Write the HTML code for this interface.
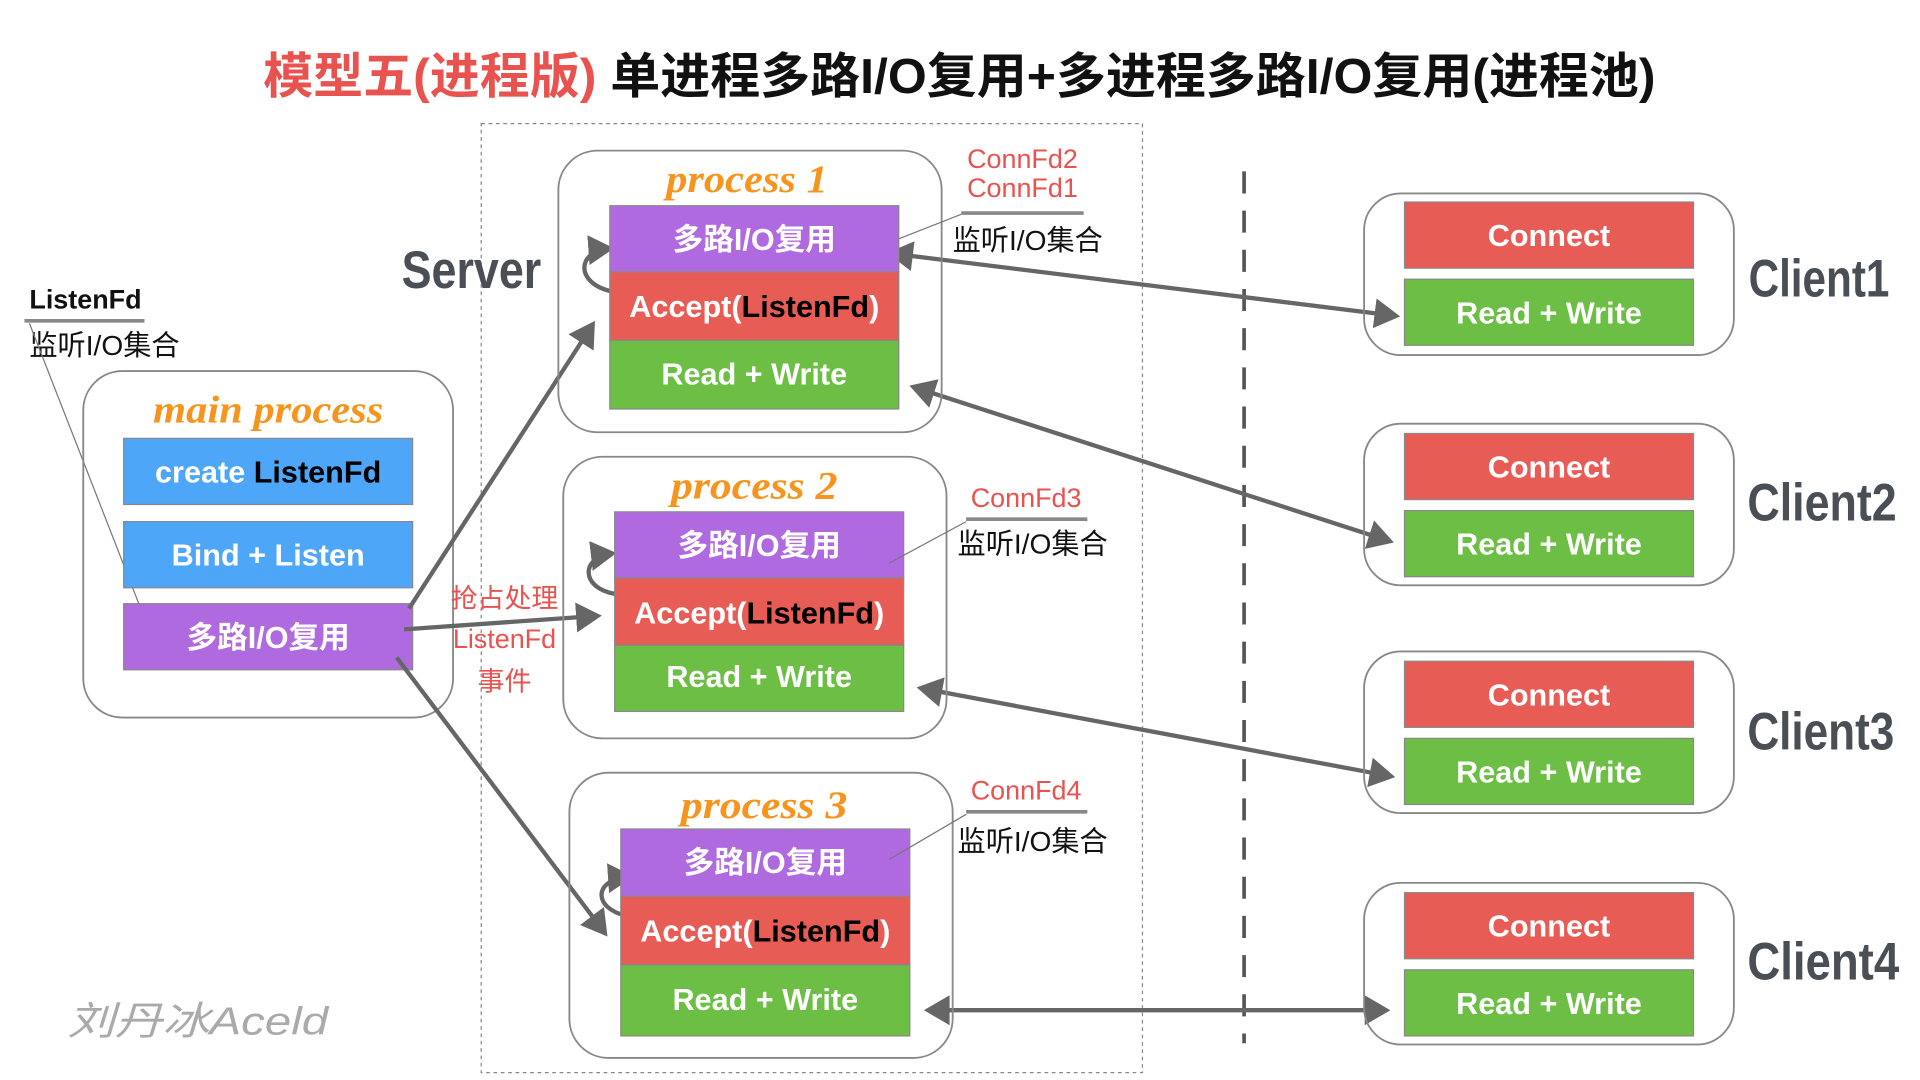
<!DOCTYPE html>
<html><head><meta charset="utf-8"><style>
html,body{margin:0;padding:0;background:#fff;width:1920px;height:1080px;overflow:hidden}
svg{display:block}
text{font-family:"Liberation Sans","Noto Sans CJK SC",sans-serif}
.w{fill:#fff;font-weight:bold;font-size:25px}
.pt{fill:#f7941d;font-weight:bold;font-size:32px;font-family:"Liberation Serif","Noto Serif CJK SC",serif;font-style:italic}
.cl{fill:#4a4f55;font-weight:bold;font-size:43px;font-family:"Liberation Sans",sans-serif}
.rl{fill:#e8534f;font-size:22px}
.bl{fill:#111;font-size:23px}
</style></head><body>
<svg width="1920" height="1080" viewBox="0 0 1568 882" preserveAspectRatio="none">
<defs><marker id="a" markerWidth="7" markerHeight="7" refX="5" refY="3.5" orient="auto" markerUnits="strokeWidth"><path d="M0,0 L6,3.5 L0,7 z" fill="#666"/></marker>
<marker id="s" markerWidth="7" markerHeight="7" refX="1" refY="3.5" orient="auto" markerUnits="strokeWidth"><path d="M6,0 L0,3.5 L6,7 z" fill="#666"/></marker></defs>
<text x="215" y="76" font-size="40" font-weight="bold" textLength="1137" lengthAdjust="spacingAndGlyphs"><tspan fill="#e8534f">模型五(进程版)</tspan><tspan fill="#111"> 单进程多路I/O复用+多进程多路I/O复用(进程池)</tspan></text>
<rect x="393" y="101" width="540" height="775" fill="none" stroke="#888" stroke-dasharray="3,3"/>
<line x1="1016" y1="140" x2="1016" y2="852" stroke="#555" stroke-width="3" stroke-dasharray="18,14"/>
<text x="328" y="235" class="cl" textLength="114" lengthAdjust="spacingAndGlyphs">Server</text>
<text x="24" y="252" font-size="22" font-weight="bold" fill="#111">ListenFd</text>
<line x1="20" y1="262" x2="118" y2="262" stroke="#888" stroke-width="3"/>
<text x="24" y="290" class="bl">监听I/O集合</text>
<line x1="24" y1="264" x2="120" y2="510" stroke="#777" stroke-width="1"/>
<rect x="68" y="303" width="302" height="283" rx="32" fill="none" stroke="#888" stroke-width="1.5"/>
<text x="125" y="345" class="pt" textLength="188" lengthAdjust="spacingAndGlyphs">main process</text>
<rect x="101" y="358" width="236" height="54" fill="#4da6f8" stroke="#888"/>
<text x="219" y="394" class="w" text-anchor="middle">create <tspan fill="#000">ListenFd</tspan></text>
<rect x="101" y="426" width="236" height="54" fill="#4da6f8" stroke="#888"/>
<text x="219" y="462" class="w" text-anchor="middle">Bind + Listen</text>
<rect x="101" y="493" width="236" height="54" fill="#b06ae0" stroke="#888"/>
<text x="219" y="529" class="w" text-anchor="middle">多路I/O复用</text>
<text x="412" y="496" class="rl" text-anchor="middle">抢占处理</text>
<text x="412" y="529" class="rl" text-anchor="middle">ListenFd</text>
<text x="412" y="564" class="rl" text-anchor="middle">事件</text>
<g stroke="#666" stroke-width="3.5" fill="none">
<path d="M334,497 L484,265" marker-end="url(#a)"/>
<path d="M330,514 L488,503" marker-end="url(#a)"/>
<path d="M324,537 L494,762" marker-end="url(#a)"/>
<path d="M728,207 L1140,258" marker-start="url(#s)" marker-end="url(#a)"/>
<path d="M746,316 L1135,442" marker-start="url(#s)" marker-end="url(#a)"/>
<path d="M752,562 L1136,634" marker-start="url(#s)" marker-end="url(#a)"/>
<path d="M758,825 L1132,825" marker-start="url(#s)" marker-end="url(#a)"/>
<path d="M500,238 C470,232 470,205 498,203" marker-end="url(#a)"/>
<path d="M502,485 C474,480 474,455 500,452" marker-end="url(#a)"/>
<path d="M512,748 C484,742 484,718 514,716" marker-end="url(#a)"/>
</g>
<g>
<rect x="456" y="123" width="313" height="230" rx="32" fill="none" stroke="#888" stroke-width="1.5"/>
<text x="544" y="157" class="pt" textLength="132" lengthAdjust="spacingAndGlyphs">process 1</text>
<rect x="498" y="168" width="236" height="54" fill="#b06ae0" stroke="#888"/><text x="616" y="204" class="w" text-anchor="middle">多路I/O复用</text>
<rect x="498" y="222" width="236" height="56" fill="#e85c56" stroke="#888"/><text x="616" y="259" class="w" text-anchor="middle">Accept(<tspan fill="#000">ListenFd</tspan>)</text>
<rect x="498" y="278" width="236" height="56" fill="#6cbf44" stroke="#888"/><text x="616" y="314" class="w" text-anchor="middle">Read + Write</text>
</g>
<g>
<rect x="460" y="373" width="313" height="230" rx="32" fill="none" stroke="#888" stroke-width="1.5"/>
<text x="548" y="407" class="pt" textLength="136" lengthAdjust="spacingAndGlyphs">process 2</text>
<rect x="502" y="418" width="236" height="54" fill="#b06ae0" stroke="#888"/><text x="620" y="454" class="w" text-anchor="middle">多路I/O复用</text>
<rect x="502" y="472" width="236" height="55" fill="#e85c56" stroke="#888"/><text x="620" y="509" class="w" text-anchor="middle">Accept(<tspan fill="#000">ListenFd</tspan>)</text>
<rect x="502" y="527" width="236" height="54" fill="#6cbf44" stroke="#888"/><text x="620" y="561" class="w" text-anchor="middle">Read + Write</text>
</g>
<g>
<rect x="465" y="631" width="313" height="233" rx="32" fill="none" stroke="#888" stroke-width="1.5"/>
<text x="556" y="668" class="pt" textLength="136" lengthAdjust="spacingAndGlyphs">process 3</text>
<rect x="507" y="677" width="236" height="55" fill="#b06ae0" stroke="#888"/><text x="625" y="713" class="w" text-anchor="middle">多路I/O复用</text>
<rect x="507" y="732" width="236" height="56" fill="#e85c56" stroke="#888"/><text x="625" y="769" class="w" text-anchor="middle">Accept(<tspan fill="#000">ListenFd</tspan>)</text>
<rect x="507" y="788" width="236" height="58" fill="#6cbf44" stroke="#888"/><text x="625" y="825" class="w" text-anchor="middle">Read + Write</text>
</g>
<text x="835" y="137" class="rl" text-anchor="middle">ConnFd2</text>
<text x="835" y="161" class="rl" text-anchor="middle">ConnFd1</text>
<line x1="785" y1="174" x2="885" y2="174" stroke="#888" stroke-width="3"/>
<text x="778" y="204" class="bl">监听I/O集合</text>
<line x1="734" y1="195" x2="785" y2="175" stroke="#777"/>
<text x="838" y="414" class="rl" text-anchor="middle">ConnFd3</text>
<line x1="789" y1="424" x2="888" y2="424" stroke="#888" stroke-width="3"/>
<text x="782" y="452" class="bl">监听I/O集合</text>
<line x1="726" y1="460" x2="789" y2="426" stroke="#777"/>
<text x="838" y="653" class="rl" text-anchor="middle">ConnFd4</text>
<line x1="789" y1="663" x2="888" y2="663" stroke="#888" stroke-width="3"/>
<text x="782" y="695" class="bl">监听I/O集合</text>
<line x1="726" y1="702" x2="789" y2="665" stroke="#777"/>
<g>
<rect x="1114" y="158" width="302" height="132" rx="30" fill="none" stroke="#888" stroke-width="1.5"/>
<rect x="1147" y="165" width="236" height="54" fill="#e85c56" stroke="#888"/><text x="1265" y="201" class="w" text-anchor="middle">Connect</text>
<rect x="1147" y="228" width="236" height="54" fill="#6cbf44" stroke="#888"/><text x="1265" y="264" class="w" text-anchor="middle">Read + Write</text>
<text x="1428" y="242" class="cl" textLength="115" lengthAdjust="spacingAndGlyphs">Client1</text>
</g>
<g>
<rect x="1114" y="346" width="302" height="132" rx="30" fill="none" stroke="#888" stroke-width="1.5"/>
<rect x="1147" y="354" width="236" height="54" fill="#e85c56" stroke="#888"/><text x="1265" y="390" class="w" text-anchor="middle">Connect</text>
<rect x="1147" y="417" width="236" height="54" fill="#6cbf44" stroke="#888"/><text x="1265" y="453" class="w" text-anchor="middle">Read + Write</text>
<text x="1427" y="425" class="cl" textLength="122" lengthAdjust="spacingAndGlyphs">Client2</text>
</g>
<g>
<rect x="1114" y="532" width="302" height="132" rx="30" fill="none" stroke="#888" stroke-width="1.5"/>
<rect x="1147" y="540" width="236" height="54" fill="#e85c56" stroke="#888"/><text x="1265" y="576" class="w" text-anchor="middle">Connect</text>
<rect x="1147" y="603" width="236" height="54" fill="#6cbf44" stroke="#888"/><text x="1265" y="639" class="w" text-anchor="middle">Read + Write</text>
<text x="1427" y="612" class="cl" textLength="120" lengthAdjust="spacingAndGlyphs">Client3</text>
</g>
<g>
<rect x="1114" y="721" width="302" height="132" rx="30" fill="none" stroke="#888" stroke-width="1.5"/>
<rect x="1147" y="729" width="236" height="54" fill="#e85c56" stroke="#888"/><text x="1265" y="765" class="w" text-anchor="middle">Connect</text>
<rect x="1147" y="792" width="236" height="54" fill="#6cbf44" stroke="#888"/><text x="1265" y="828" class="w" text-anchor="middle">Read + Write</text>
<text x="1427" y="800" class="cl" textLength="124" lengthAdjust="spacingAndGlyphs">Client4</text>
</g>
<text x="55" y="845" font-size="32" fill="#aaa" font-style="italic" font-family="Liberation Serif,Noto Serif CJK SC,serif" textLength="213" lengthAdjust="spacingAndGlyphs">刘丹冰Aceld</text>
</svg>
</body></html>
